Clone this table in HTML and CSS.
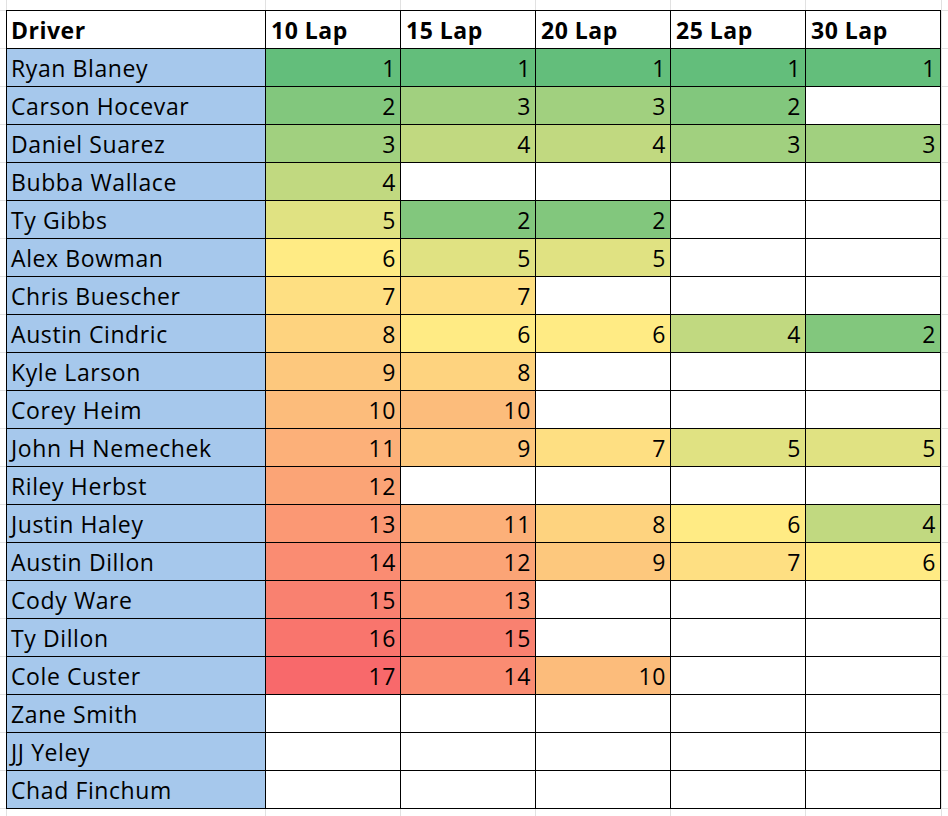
FILE: index.html
```html
<!DOCTYPE html>
<html lang="en">
<head>
<meta charset="utf-8">
<title>Lap Rankings</title>
<link rel="stylesheet" href="styles.css">
</head>
<body>
<div class="sheet">
  <div class="grid">
    <div class="cell head name">Driver</div><div class="cell head">10 Lap</div><div class="cell head">15 Lap</div><div class="cell head">20 Lap</div><div class="cell head">25 Lap</div><div class="cell head">30 Lap</div>

    <div class="cell name">Ryan Blaney</div><div class="cell num c1">1</div><div class="cell num c1">1</div><div class="cell num c1">1</div><div class="cell num c1">1</div><div class="cell num c1">1</div>
    <div class="cell name">Carson Hocevar</div><div class="cell num c2">2</div><div class="cell num c3">3</div><div class="cell num c3">3</div><div class="cell num c2">2</div><div class="cell"></div>
    <div class="cell name">Daniel Suarez</div><div class="cell num c3">3</div><div class="cell num c4">4</div><div class="cell num c4">4</div><div class="cell num c3">3</div><div class="cell num c3">3</div>
    <div class="cell name">Bubba Wallace</div><div class="cell num c4">4</div><div class="cell"></div><div class="cell"></div><div class="cell"></div><div class="cell"></div>
    <div class="cell name">Ty Gibbs</div><div class="cell num c5">5</div><div class="cell num c2">2</div><div class="cell num c2">2</div><div class="cell"></div><div class="cell"></div>
    <div class="cell name">Alex Bowman</div><div class="cell num c6">6</div><div class="cell num c5">5</div><div class="cell num c5">5</div><div class="cell"></div><div class="cell"></div>
    <div class="cell name">Chris Buescher</div><div class="cell num c7">7</div><div class="cell num c7">7</div><div class="cell"></div><div class="cell"></div><div class="cell"></div>
    <div class="cell name">Austin Cindric</div><div class="cell num c8">8</div><div class="cell num c6">6</div><div class="cell num c6">6</div><div class="cell num c4">4</div><div class="cell num c2">2</div>
    <div class="cell name">Kyle Larson</div><div class="cell num c9">9</div><div class="cell num c8">8</div><div class="cell"></div><div class="cell"></div><div class="cell"></div>
    <div class="cell name">Corey Heim</div><div class="cell num c10">10</div><div class="cell num c10">10</div><div class="cell"></div><div class="cell"></div><div class="cell"></div>
    <div class="cell name">John H Nemechek</div><div class="cell num c11">11</div><div class="cell num c9">9</div><div class="cell num c7">7</div><div class="cell num c5">5</div><div class="cell num c5">5</div>
    <div class="cell name">Riley Herbst</div><div class="cell num c12">12</div><div class="cell"></div><div class="cell"></div><div class="cell"></div><div class="cell"></div>
    <div class="cell name">Justin Haley</div><div class="cell num c13">13</div><div class="cell num c11">11</div><div class="cell num c8">8</div><div class="cell num c6">6</div><div class="cell num c4">4</div>
    <div class="cell name">Austin Dillon</div><div class="cell num c14">14</div><div class="cell num c12">12</div><div class="cell num c9">9</div><div class="cell num c7">7</div><div class="cell num c6">6</div>
    <div class="cell name">Cody Ware</div><div class="cell num c15">15</div><div class="cell num c13">13</div><div class="cell"></div><div class="cell"></div><div class="cell"></div>
    <div class="cell name">Ty Dillon</div><div class="cell num c16">16</div><div class="cell num c15">15</div><div class="cell"></div><div class="cell"></div><div class="cell"></div>
    <div class="cell name">Cole Custer</div><div class="cell num c17">17</div><div class="cell num c14">14</div><div class="cell num c10">10</div><div class="cell"></div><div class="cell"></div>
    <div class="cell name">Zane Smith</div><div class="cell"></div><div class="cell"></div><div class="cell"></div><div class="cell"></div><div class="cell"></div>
    <div class="cell name">JJ Yeley</div><div class="cell"></div><div class="cell"></div><div class="cell"></div><div class="cell"></div><div class="cell"></div>
    <div class="cell name">Chad Finchum</div><div class="cell"></div><div class="cell"></div><div class="cell"></div><div class="cell"></div><div class="cell"></div>
  </div>
</div>
</body>
</html>
```
FILE: styles.css
```css
html, body {
  margin: 0;
  padding: 0;
  background: #fff;
}
.sheet {
  width: 948px;
  height: 816px;
  box-sizing: border-box;
  padding: 10px 0 0 6px;
  overflow: hidden;
  background-color: #fff;
  background-image:
    linear-gradient(#e1e1e1, #e1e1e1),
    linear-gradient(#e1e1e1, #e1e1e1),
    linear-gradient(#e1e1e1, #e1e1e1),
    linear-gradient(#e1e1e1, #e1e1e1),
    linear-gradient(#e1e1e1, #e1e1e1),
    linear-gradient(#e1e1e1, #e1e1e1),
    linear-gradient(#e1e1e1, #e1e1e1),
    linear-gradient(to bottom, #e1e1e1 1px, transparent 1px);
  background-size:
    1px 100%, 1px 100%, 1px 100%, 1px 100%, 1px 100%, 1px 100%, 1px 100%,
    100% 38px;
  background-position:
    6px 0, 265px 0, 400px 0, 535px 0, 670px 0, 805px 0, 941px 0,
    0 10px;
  background-repeat:
    no-repeat, no-repeat, no-repeat, no-repeat, no-repeat, no-repeat, no-repeat,
    repeat-y;
}
.grid {
  display: grid;
  grid-template-columns: 258px repeat(5, 134px);
  grid-auto-rows: 37px;
  gap: 1px;
  padding: 1px;
  width: max-content;
  background: #000;
  font-family: "Open Sans", "Liberation Sans", sans-serif;
  font-size: 23px;
  letter-spacing: 0.6px;
  color: #000;
}
.cell {
  background: #fff;
  box-sizing: border-box;
  height: 37px;
  line-height: 37px;
  padding-top: 1px;
  white-space: nowrap;
  overflow: hidden;
}
.name {
  background: #a6c8ec;
  padding-left: 4px;
}
.head {
  font-weight: 700;
  letter-spacing: 0.5px;
  padding-left: 5px;
}
.head.name {
  background: #fff;
  padding-left: 4px;
}
.num {
  text-align: right;
  padding-right: 4px;
}
.c1 { background: #63be7b; }
.c2 { background: #82c77d; }
.c3 { background: #a1d07f; }
.c4 { background: #c1d980; }
.c5 { background: #e0e282; }
.c6 { background: #ffeb84; }
.c7 { background: #fedf82; }
.c8 { background: #fed37f; }
.c9 { background: #fdc87d; }
.c10 { background: #fcbc7b; }
.c11 { background: #fcb079; }
.c12 { background: #fba476; }
.c13 { background: #fb9874; }
.c14 { background: #fa8c72; }
.c15 { background: #f98170; }
.c16 { background: #f9756d; }
.c17 { background: #f8696b; }
```
